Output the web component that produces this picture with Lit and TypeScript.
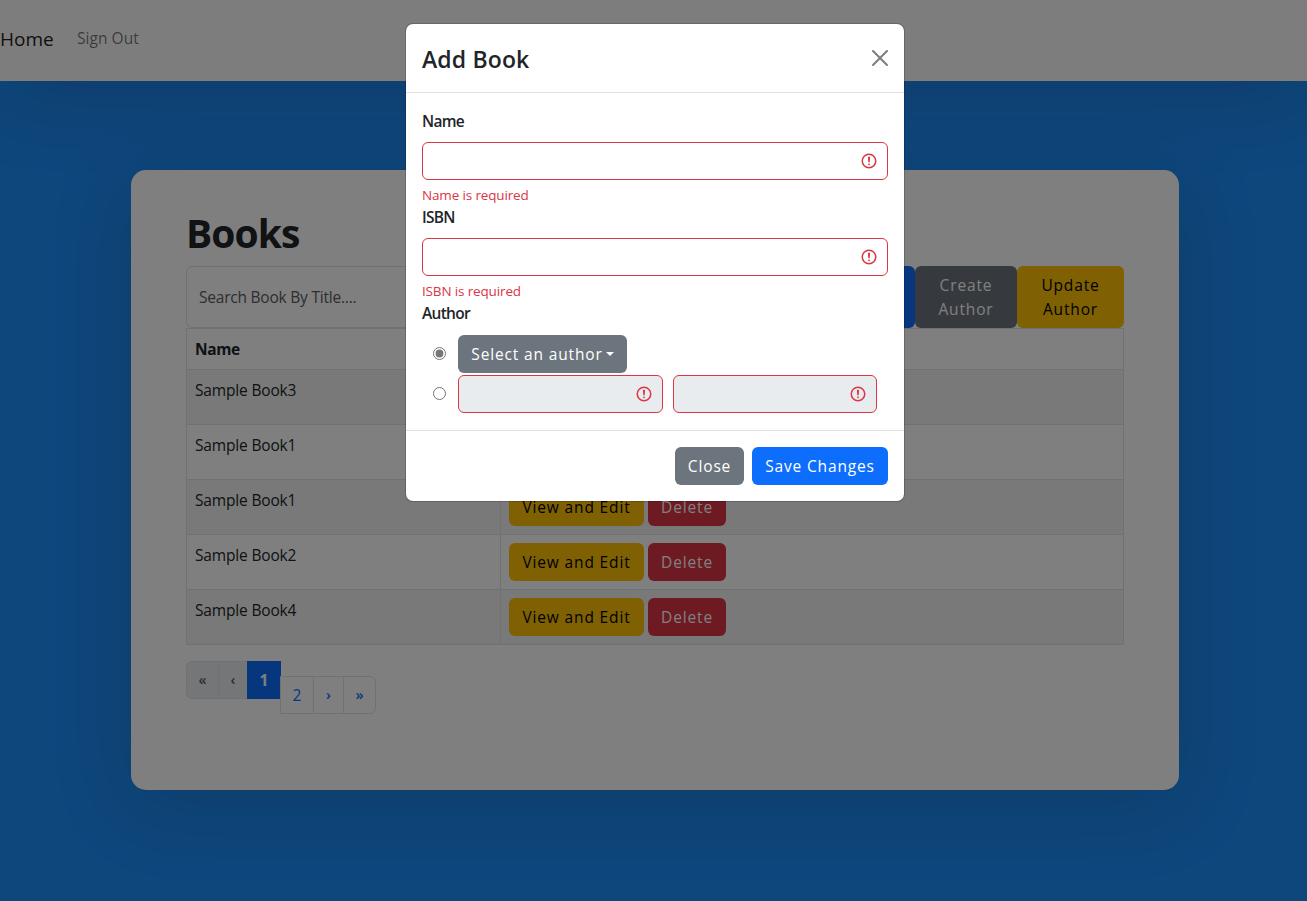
import { LitElement, html, css, svg } from "lit";
import { customElement } from "lit/decorators.js";

const books = ["Sample Book3", "Sample Book1", "Sample Book1", "Sample Book2", "Sample Book4"];

const alertIcon = html`<svg class="alert" viewBox="0 0 12 12" width="18" height="18" fill="none" stroke="#dc3545">
  ${svg`<circle cx="6" cy="6" r="4.5"/><path stroke-linejoin="round" d="M5.8 3.6h.4L6 6.5z"/><circle cx="6" cy="8.2" r=".6" fill="#dc3545" stroke="none"/>`}
</svg>`;

@customElement("app-root")
export class AppRoot extends LitElement {
  static styles = css`
    * { box-sizing: border-box; }
    :host {
      display: block; position: relative; height: 901px; overflow: hidden;
      background: #1c8ef9; color: #212529;
      font: 400 15.5px/24px "Open Sans", "Noto Sans", sans-serif;
    }
    .navbar {
      height: 81px; background: #fafafa; display: flex; align-items: center; padding-bottom: 5px;
      box-shadow: 0 14px 80px rgba(34, 35, 58, 0.2);
    }
    .brand { font-size: 19px; line-height: 30px; width: 70px; color: rgba(0,0,0,.9); padding-top: 2px; }
    .link { margin-left: 7px; color: rgba(0,0,0,.55); letter-spacing: 0.05px; }
    .card {
      margin: 89px 128px 0 131px; height: 620px; background: #fff; border-radius: 15px;
      padding: 40px 55px 45px; box-shadow: 0 14px 80px rgba(34, 35, 58, 0.2);
    }
    h1 { margin: -1px 0 9px; font-size: 39px; line-height: 48px; font-weight: 670; letter-spacing: -0.9px; }
    .tools { display: flex; height: 62px; }
    .search { flex: 1; border: 1px solid #dee2e6; border-radius: 6px; padding: 18px 12px; color: #595c5f; letter-spacing: -0.22px; }
    .btn {
      display: inline-flex; align-items: center; justify-content: center; text-align: center;
      height: 38px; border: 0; border-radius: 6px; padding: 0;
      font: inherit; letter-spacing: 0.85px; color: #fff;
    }
    .tools .btn { height: 62px; }
    .primary { background: #0d6efd; }
    .secondary { background: #6c757d; }
    .warning { background: #ffc107; color: #000; }
    .danger { background: #dc3545; }
    .w-add { width: 102px; }
    .w-create { width: 102px; }
    .w-update { width: 107px; }
    .w-view { width: 135px; }
    .w-delete { width: 78px; }
    .w-close { width: 69px; }
    .w-save { width: 136px; }
    .w-select { width: 169px; }
    table { width: 100%; border-collapse: collapse; table-layout: fixed; }
    .col-name { width: 314px; }
    th, td { border: 1px solid #dee2e6; padding: 8px; text-align: left; vertical-align: top; }
    th { height: 41px; font-weight: 700; letter-spacing: -0.4px; }
    td { height: 55px; letter-spacing: -0.17px; }
    tr:nth-child(odd) td { background: #f2f2f2; }
    .actions { display: flex; gap: 4px; }
    .pages { display: flex; margin-top: 16px; align-items: flex-start; }
    .page {
      height: 38px; border: 1px solid #dee2e6; color: #0d6efd;
      display: flex; align-items: center; justify-content: center; margin-left: -1px;
    }
    .page:first-child { margin-left: 0; border-radius: 6px 0 0 6px; width: 33px; }
    .page.off { background: #e9ecef; color: rgba(33, 37, 41, 0.75); font-weight: 600; }
    .page.prev { width: 30px; }
    .page.on { background: #0d6efd; border-color: #0d6efd; color: #fff; width: 34px; font-weight: 700; }
    .page.two { width: 34px; }
    .page.next { width: 31px; font-weight: 600; }
    .page.last { width: 33px; border-radius: 0 6px 6px 0; font-weight: 600; }
    .page.off, .page.next, .page.last { font-size: 14.5px; }
    .page.low { margin-top: 15px; }
    .backdrop { position: absolute; inset: 0; background: rgba(0, 0, 0, 0.5); }
    .modal {
      position: absolute; top: 23px; left: 405px; width: 500px; height: 479px; background: #fff;
      background-clip: padding-box; border: 1px solid rgba(0, 0, 0, 0.175); border-radius: 8px;
    }
    .head { display: flex; align-items: center; justify-content: space-between; height: 69px; padding: 0 16px; border-bottom: 1px solid #dee2e6; }
    .title { font-size: 23px; line-height: 36px; font-weight: 550; padding-top: 1px; letter-spacing: 0.15px; }
    .body { height: 337px; padding: 16px 16px 0; }
    .label { display: block; height: 33px; font-weight: 650; letter-spacing: -0.7px; }
    .label.last { height: 34px; }
    .field { display: flex; align-items: center; justify-content: flex-end; height: 38px; padding-right: 9px; border: 1px solid #dc3545; border-radius: 6px; background: #fff; }
    .field.off { background: #e9ecef; }
    .error { margin-top: 4px; height: 21px; font-size: 13.5px; line-height: 22px; color: #dc3545; letter-spacing: -0.15px; }
    .choice { display: grid; grid-template-columns: 36px 1fr; align-items: center; height: 38px; margin-bottom: 2px; }
    .radio { width: 13px; height: 13px; margin: 0 0 2px 11px; accent-color: #767676; }
    .names { display: grid; grid-template-columns: 205px 204px; gap: 10px; }
    .caret { margin-left: 3px; border-top: 4.8px solid; border-left: 4.8px solid transparent; border-right: 4.8px solid transparent; }
    .foot { display: flex; justify-content: flex-end; gap: 8px; height: 71px; padding: 16px; border-top: 1px solid #dee2e6; }
    .close { opacity: 0.5; }
    .alert, .close { display: block; }
  `;

  render() {
    return html`
      <nav class="navbar"><span class="brand">Home</span><span class="link">Sign Out</span></nav>
      <main class="card">
        <h1>Books</h1>
        <div class="tools">
          <div class="search">Search Book By Title....</div>
          <button class="btn primary w-add">Add<br />Book</button>
          <button class="btn secondary w-create">Create<br />Author</button>
          <button class="btn warning w-update">Update<br />Author</button>
        </div>
        <table>
          <colgroup><col class="col-name" /><col /></colgroup>
          <thead><tr><th>Name</th><th></th></tr></thead>
          <tbody>
            ${books.map((name) => html`<tr>
              <td>${name}</td>
              <td><div class="actions"><button class="btn warning w-view">View and Edit</button><button class="btn danger w-delete">Delete</button></div></td>
            </tr>`)}
          </tbody>
        </table>
        <div class="pages">
          <span class="page off">«</span><span class="page off prev">‹</span><span class="page on">1</span>
          <span class="page low two">2</span><span class="page low next">›</span><span class="page low last">»</span>
        </div>
      </main>
      <div class="backdrop"></div>
      <section class="modal" role="dialog" aria-label="Add Book">
        <header class="head">
          <span class="title">Add Book</span>
          <svg class="close" width="16" height="16" viewBox="0 0 16 16"><path d="M.293.293a1 1 0 0 1 1.414 0L8 6.586 14.293.293a1 1 0 1 1 1.414 1.414L9.414 8l6.293 6.293a1 1 0 0 1-1.414 1.414L8 9.414l-6.293 6.293a1 1 0 0 1-1.414-1.414L6.586 8 .293 1.707a1 1 0 0 1 0-1.414z" /></svg>
        </header>
        <div class="body">
          <span class="label">Name</span>
          <div class="field">${alertIcon}</div>
          <div class="error">Name is required</div>
          <span class="label">ISBN</span>
          <div class="field">${alertIcon}</div>
          <div class="error">ISBN is required</div>
          <span class="label last">Author</span>
          <div class="choice">
            <input class="radio" type="radio" name="author" checked />
            <button class="btn secondary w-select">Select an author<span class="caret"></span></button>
          </div>
          <div class="choice">
            <input class="radio" type="radio" name="author" />
            <div class="names"><div class="field off">${alertIcon}</div><div class="field off">${alertIcon}</div></div>
          </div>
        </div>
        <footer class="foot">
          <button class="btn secondary w-close">Close</button>
          <button class="btn primary w-save">Save Changes</button>
        </footer>
      </section>
    `;
  }
}
